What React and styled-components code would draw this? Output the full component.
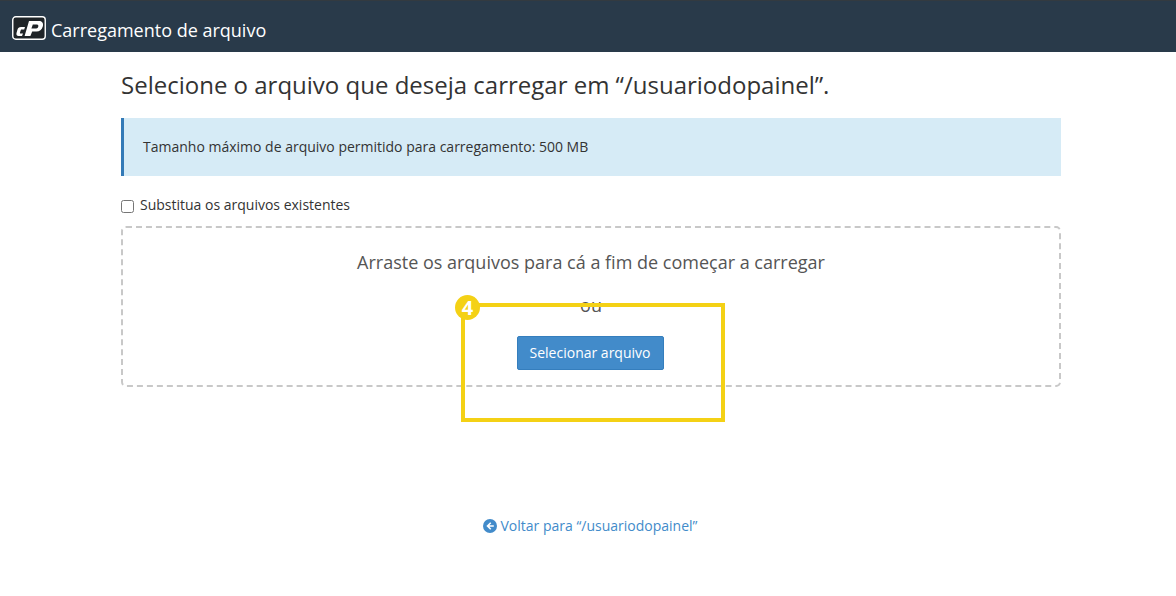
import React from "react";
import styled, { createGlobalStyle } from "styled-components";

const GlobalStyle = createGlobalStyle`
  html, body {
    margin: 0;
    padding: 0;
    background: #ffffff;
    font-family: "Open Sans", "Liberation Sans", sans-serif;
    color: #333333;
  }
  * {
    box-sizing: border-box;
  }
`;

const Page = styled.div`
  width: 1176px;
  height: 596px;
  overflow: hidden;
`;

const Header = styled.header`
  height: 52px;
  background: #293a4a;
  border-top: 1px solid #333a40;
  display: flex;
  align-items: center;
  padding: 3px 0 0 12px;
  gap: 5px;
`;

const HeaderTitle = styled.h1`
  margin: 4px 0 0;
  font-size: 18px;
  font-weight: 400;
  line-height: 24px;
  color: #ffffff;
`;

const Main = styled.main`
  width: 940px;
  margin: 0 0 0 121px;
  padding-top: 16px;
  display: flex;
  flex-direction: column;
`;

const Title = styled.h2`
  margin: 0;
  font-size: 24px;
  font-weight: 400;
  line-height: 34px;
  color: #333333;
`;

const Notice = styled.div`
  margin-top: 16px;
  height: 58px;
  background: #d6ebf6;
  border-left: 3px solid #337ab7;
  padding: 0 0 2px 19px;
  display: flex;
  align-items: center;
  font-size: 14px;
  color: #333333;
`;

const CheckRow = styled.label`
  margin-top: 18px;
  height: 20px;
  display: flex;
  align-items: center;
  gap: 6px;
  font-size: 14px;
  color: #333333;
`;

const Check = styled.input`
  margin: 4px 0 0;
  width: 13px;
  height: 13px;
`;

const DropZone = styled.div`
  position: relative;
  margin-top: 12px;
  height: 161px;
  border: 2px dashed #c8c8c8;
  border-radius: 5px;
  display: flex;
  flex-direction: column;
  align-items: center;
  padding-top: 22px;
`;

const DropText = styled.div`
  font-size: 18px;
  line-height: 25px;
  color: #555555;
`;

const OrText = styled(DropText)`
  margin-top: 18px;
`;

const SelectButton = styled.button`
  margin: 18px 2px 0 0;
  width: 147px;
  height: 34px;
  padding: 0 0 2px;
  background: #428bca;
  border: 1px solid #357ebd;
  border-radius: 2px;
  color: #ffffff;
  font-family: inherit;
  font-size: 14px;
`;

const Highlight = styled.div`
  position: absolute;
  left: 338px;
  top: 75px;
  width: 264px;
  height: 119px;
  border: 4px solid #f4d115;
`;

const Badge = styled.span`
  position: absolute;
  left: -10px;
  top: -12px;
  width: 25px;
  height: 25px;
  border-radius: 50%;
  background: #f4d115;
  color: #ffffff;
  font-size: 20px;
  font-weight: 700;
  line-height: 25px;
  text-align: center;
`;

const BackRow = styled.div`
  margin-top: 129px;
  padding-right: 2px;
  display: flex;
  justify-content: center;
`;

const BackLink = styled.a`
  display: flex;
  align-items: center;
  gap: 4px;
  font-size: 14px;
  line-height: 20px;
  color: #428bca;
  text-decoration: none;
`;

const Logo = () => (
  <svg width="34" height="24" viewBox="0 0 34 24" aria-hidden="true">
    <rect x="0.75" y="0.75" width="32.5" height="22.5" rx="3" fill="#1f2428" stroke="#ffffff" strokeWidth="1.4" />
    <path d="M13 11H9C7 11 6 12 5.5 13.5L4.5 17C4 19 5 20 6.5 20H10L11 17.5H8.5C8 17.5 7.8 17 8 16.5L8.8 14C9 13.5 9.3 13.4 9.8 13.4H12.2Z" fill="#ffffff" />
    <path
      fillRule="evenodd"
      d="M17 5H27C30.5 5 31.7 7.5 30.8 10.5C29.8 13.8 27.5 15.5 24.5 15.5H20.2L18.4 20H12.6ZM20.8 8.4L19.4 12.4H24.2C25.4 12.4 26 11.6 26.3 10.4C26.5 9.2 26.1 8.4 25 8.4Z"
      fill="#ffffff"
    />
  </svg>
);

const BackIcon = () => (
  <svg width="14" height="14" viewBox="0 0 14 14" aria-hidden="true">
    <circle cx="7" cy="7" r="7" fill="#428bca" />
    <path d="M7.2 3.2 3.4 7l3.8 3.8 1.1-1.1L6.4 7.8h4.4V6.2H6.4l1.9-1.9Z" fill="#ffffff" />
  </svg>
);

export default function App() {
  return (
    <Page>
      <GlobalStyle />
      <Header>
        <Logo />
        <HeaderTitle>Carregamento de arquivo</HeaderTitle>
      </Header>
      <Main>
        <Title>Selecione o arquivo que deseja carregar em “/usuariodopainel”.</Title>
        <Notice>Tamanho máximo de arquivo permitido para carregamento: 500 MB</Notice>
        <CheckRow>
          <Check type="checkbox" />
          Substitua os arquivos existentes
        </CheckRow>
        <DropZone>
          <DropText>Arraste os arquivos para cá a fim de começar a carregar</DropText>
          <OrText>ou</OrText>
          <SelectButton type="button">Selecionar arquivo</SelectButton>
          <Highlight>
            <Badge>4</Badge>
          </Highlight>
        </DropZone>
        <BackRow>
          <BackLink href="#">
            <BackIcon />
            Voltar para “/usuariodopainel”
          </BackLink>
        </BackRow>
      </Main>
    </Page>
  );
}
